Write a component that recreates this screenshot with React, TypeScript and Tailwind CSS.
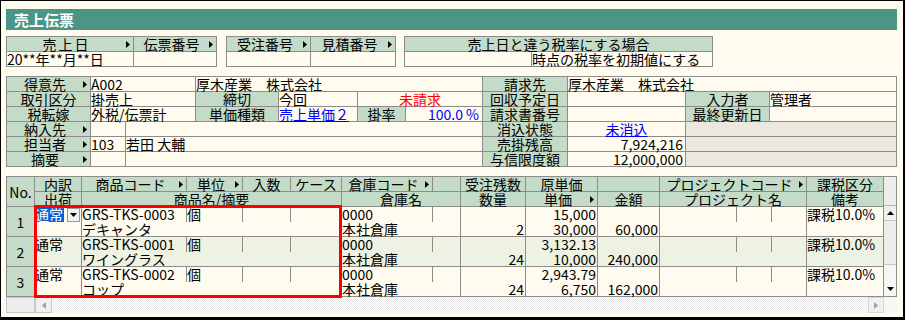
import React from "react";

const B = "border-[#8c8c8c]";

function Tri() {
  return (
    <svg width="4" height="7" viewBox="0 0 4 7" className="shrink-0">
      <polygon points="0,0 4,3.5 0,7" fill="#000" />
    </svg>
  );
}

function L({ children, tri, className = "" }: { children?: React.ReactNode; tri?: boolean; className?: string }) {
  return (
    <div className={`flex items-center border-r border-b border-[#8c8c8c] bg-[#c4dcc7] leading-[14px] whitespace-nowrap overflow-x-clip ${className}`}>
      <span className="flex-1 text-center">{children}</span>
      {tri && (
        <>
          <Tri />
          <span className="w-[3px] shrink-0" />
        </>
      )}
    </div>
  );
}

function V({ children, className = "" }: { children?: React.ReactNode; className?: string }) {
  return (
    <div className={`border-r border-b border-[#8c8c8c] leading-[14px] whitespace-nowrap overflow-x-clip ${className}`}>
      {children}
    </div>
  );
}

type Row = {
  code: string;
  name: string;
  zan: string;
  gen: string;
  tanka: string;
  kingaku: string;
  alt: boolean;
  sel: boolean;
};

const rows: Row[] = [
  { code: "GRS-TKS-0003", name: "デキャンタ", zan: "2", gen: "15,000", tanka: "30,000", kingaku: "60,000", alt: false, sel: true },
  { code: "GRS-TKS-0001", name: "ワイングラス", zan: "24", gen: "3,132.13", tanka: "10,000", kingaku: "240,000", alt: true, sel: false },
  { code: "GRS-TKS-0002", name: "コップ", zan: "24", gen: "2,943.79", tanka: "6,750", kingaku: "162,000", alt: false, sel: false },
];

function DataRow({ r, no }: { r: Row; no: number }) {
  const bg = r.alt ? "bg-[#edf2e2]" : "bg-[#fffbef]";
  const c = `leading-[15px] whitespace-nowrap overflow-x-clip ${bg}`;
  const g = "border-[#8c8c8c]";
  return (
    <>
      <div className={`row-span-2 flex items-center justify-center border-r border-b ${g} bg-[#c4dcc7] leading-[14px]`}>{no}</div>
      <div className={`row-span-2 border-r border-b ${g} ${c}`}>
        {r.sel ? (
          <div className="flex h-[15px] items-center">
            <span className="bg-[#0a5fd0] text-white leading-[15px] pr-[1px]">通常</span>
            <span className="ml-[3px] flex h-[14px] w-[13px] items-center justify-center border border-[#9a9a9a] bg-[#f2f2f2]">
              <svg width="7" height="4" viewBox="0 0 7 4"><polygon points="0,0 7,0 3.5,4" fill="#000" /></svg>
            </span>
          </div>
        ) : (
          <span>通常</span>
        )}
      </div>
      <div className={`border-r ${g} ${c}`}>{r.code}</div>
      <div className={`border-r ${g} ${c}`}>個</div>
      <div className={`border-r ${g} ${c}`} />
      <div className={`border-r ${g} ${c}`} />
      <div className={`border-r ${g} ${c}`}>0000</div>
      <div className={`border-r ${g} ${c}`} />
      <div className={`row-span-2 flex flex-col justify-end border-r border-b ${g} ${c} text-right pr-[1px]`}>
        <span className="leading-[14px]">{r.zan}</span>
      </div>
      <div className={`row-span-2 border-r border-b ${g} ${c} text-right pr-[1px]`}>
        <div className="leading-[15px]">{r.gen}</div>
        <div className="leading-[14px]">{r.tanka}</div>
      </div>
      <div className={`row-span-2 flex flex-col justify-end border-r border-b ${g} ${c} text-right pr-[1px]`}>
        <span className="leading-[14px]">{r.kingaku}</span>
      </div>
      <div className={`border-r ${g} ${c}`} />
      <div className={`border-r ${g} ${c}`} />
      <div className={`border-r ${g} ${c}`} />
      <div className={`row-span-2 border-r border-b ${g} ${c}`}>課税10.0%</div>
      <div className={`col-span-4 border-r border-b ${g} ${c} leading-[14px]`}>{r.name}</div>
      <div className={`col-span-2 border-r border-b ${g} ${c} leading-[14px]`}>本社倉庫</div>
      <div className={`col-span-3 border-r border-b ${g} ${c}`} />
    </>
  );
}

export default function App() {
  return (
    <div className="relative w-[905px] h-[320px] overflow-hidden border border-r-2 border-b-[3px] border-black bg-[#fffbef] pl-[5px] pt-[8px] text-[14px] text-black font-['Noto_Sans_CJK_JP',sans-serif]">
      {/* Title */}
      <div className="flex h-[21px] w-[891px] items-center bg-[#4a9585] pl-[8px] text-[15px] font-bold text-white leading-[21px]">
        売上伝票
      </div>

      {/* Header blocks */}
      <div className="mt-[6px] flex">
        <div className={`grid grid-cols-[127px_83px] auto-rows-[15px] border-l border-t ${B}`}>
          <L tri><span className="tracking-[2px]">売上日</span></L>
          <L tri>伝票番号</L>
          <V>20**年**月**日</V>
          <V />
        </div>
        <div className={`ml-[9px] grid grid-cols-[84px_85px] auto-rows-[15px] border-l border-t ${B}`}>
          <L tri>受注番号</L>
          <L tri>見積番号</L>
          <V />
          <V />
        </div>
        <div className={`ml-[8px] grid grid-cols-[127px_181px] auto-rows-[15px] border-l border-t ${B}`}>
          <L className="col-span-2">売上日と違う税率にする場合</L>
          <V />
          <V>時点の税率を初期値にする</V>
        </div>
      </div>

      {/* Customer info */}
      <div className={`mt-[9px] grid w-[891px] grid-cols-[84px_35px_70px_83px_79px_48px_77px_85px_118px_84px_127px] auto-rows-[15px] border-l border-t ${B}`}>
        <L tri>得意先</L>
        <V className="col-span-2">A002</V>
        <V className="col-span-4">厚木産業　株式会社</V>
        <L>請求先</L>
        <V className="col-span-3">厚木産業　株式会社</V>

        <L>取引区分</L>
        <V className="col-span-2">掛売上</V>
        <L>締切</L>
        <V>今回</V>
        <V className="col-span-2 text-center text-[#ff0000]">未請求</V>
        <L>回収予定日</L>
        <V />
        <L>入力者</L>
        <V>管理者</V>

        <L>税転嫁</L>
        <V className="col-span-2">外税/伝票計</V>
        <L>単価種類</L>
        <V className="text-[#0000ff] underline underline-offset-1">売上単価２</V>
        <L>掛率</L>
        <V className="pr-[3px] text-right text-[#0000ff]">100.0 %</V>
        <L>請求書番号</L>
        <V />
        <L>最終更新日</L>
        <V />

        <L tri>納入先</L>
        <V />
        <V className="col-span-5" />
        <L>消込状態</L>
        <V className="text-center text-[#0000ff] underline underline-offset-1">未消込</V>
        <V className="col-span-2 bg-[#ebe8df]" />

        <L tri>担当者</L>
        <V>103</V>
        <V className="col-span-5">若田 大輔</V>
        <L>売掛残高</L>
        <V className="pr-[2px] text-right">7,924,216</V>
        <V className="col-span-2 bg-[#ebe8df]" />

        <L tri>摘要</L>
        <V />
        <V className="col-span-5" />
        <L>与信限度額</L>
        <V className="pr-[2px] text-right">12,000,000</V>
        <V className="col-span-2 bg-[#ebe8df]" />
      </div>

      {/* Detail grid */}
      <div className="mt-[9px] flex w-[891px]">
        <div className={`grid grid-cols-[28px_47px_105px_56px_48px_51px_91px_28px_65px_72px_62px_77px_35px_35px_77px] auto-rows-[15px] border-l border-t ${B}`}>
          <L className="row-span-2">No.</L>
          <L>内訳</L>
          <L tri>商品コード</L>
          <L tri>単位</L>
          <L>入数</L>
          <L>ケース</L>
          <L tri>倉庫コード</L>
          <L />
          <L>受注残数</L>
          <L>原単価</L>
          <L />
          <L tri className="col-span-3">プロジェクトコード</L>
          <L>課税区分</L>

          <L>出荷</L>
          <L className="col-span-4">商品名/摘要</L>
          <L className="col-span-2">倉庫名</L>
          <L>数量</L>
          <L tri>単価</L>
          <L>金額</L>
          <L className="col-span-3">プロジェクト名</L>
          <L>備考</L>

          {rows.map((r, i) => (
            <DataRow key={i} r={r} no={i + 1} />
          ))}
        </div>
        {/* vertical scrollbar */}
        <div className={`flex w-[13px] flex-col border-t border-r border-b ${B}`}>
          <div className="h-[29px] border-b border-[#b5b5b5] bg-[#ededed]" />
          <div className="flex h-[15px] items-center justify-center border-b border-[#c8c8c8] bg-[#f0f0f0]">
            <svg width="7" height="4" viewBox="0 0 7 4"><polygon points="3.5,0 7,4 0,4" fill="#000" /></svg>
          </div>
          <div className="h-[44px] border-b border-[#c8c8c8] bg-[#ededed]" />
          <div className="flex-1 bg-[#f6f6f2]" />
          <div className="flex h-[15px] items-center justify-center bg-[#f6f6f2]">
            <svg width="7" height="4" viewBox="0 0 7 4"><polygon points="0,0 7,0 3.5,4" fill="#000" /></svg>
          </div>
        </div>
      </div>

      {/* horizontal scrollbar */}
      <div className="flex h-[16px] w-[891px]">
        <div className="w-[29px] border border-[#c8c8c8] bg-[#ededed]" />
        <div className="flex w-[17px] items-center justify-center border border-[#c8c8c8] bg-[#f0f0f0]">
          <svg width="4" height="7" viewBox="0 0 4 7"><polygon points="4,0 4,7 0,3.5" fill="#a0a0a0" /></svg>
        </div>
        <div className="flex-1 bg-[repeating-conic-gradient(#e9e9e9_0%_25%,#ffffff_0%_50%)] bg-size-[2px_2px]" />
        <div className="flex w-[16px] items-center justify-center border border-[#d8d8d8] bg-[#f0f0f0]">
          <svg width="4" height="7" viewBox="0 0 4 7"><polygon points="0,0 4,3.5 0,7" fill="#a0a0a0" /></svg>
        </div>
        <div className="w-[13px] bg-[#f6f6f2]" />
      </div>

      {/* red highlight */}
      <div className="absolute left-[33px] top-[204px] h-[93px] w-[308px] border-[3px] border-[#ff0000]" />
    </div>
  );
}
